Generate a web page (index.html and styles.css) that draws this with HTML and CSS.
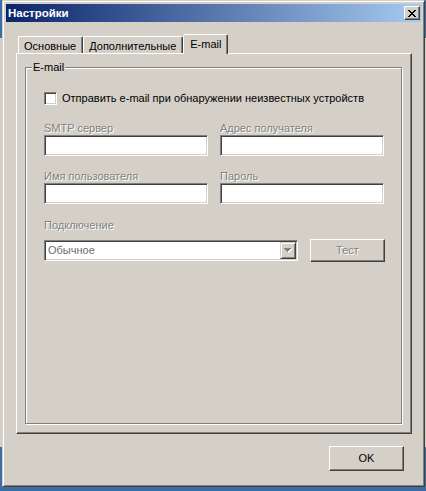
FILE: index.html
```html
<!DOCTYPE html>
<html lang="ru">
<head>
  <meta charset="UTF-8">
  <title>Настройки</title>
  <link rel="stylesheet" href="styles.css">
</head>
<body>

<!-- window behind the dialog -->
<div class="backdrop"></div>

<div class="dialog">
  <div class="titlebar">
    <span class="title">Настройки</span>
    <button class="close" title="Закрыть">
      <svg width="8" height="7" viewBox="0 0 8 7" shape-rendering="crispEdges">
        <path d="M0 0h2v1h-2zM6 0h2v1h-2zM1 1h2v1h-2zM5 1h2v1h-2zM2 2h4v1h-4zM3 3h2v1h-2zM2 4h4v1h-4zM1 5h2v1h-2zM5 5h2v1h-2zM0 6h2v1h-2zM6 6h2v1h-2z" fill="#000"/>
      </svg>
    </button>
  </div>

  <div class="tabs">
    <div class="tab">Основные</div>
    <div class="tab">Дополнительные</div>
    <div class="tab active">E-mail</div>
  </div>

  <div class="panel">
    <div class="group">
      <span class="legend">E-mail</span>

      <label class="check"><span class="box"></span>Отправить e-mail при обнаружении неизвестных устройств</label>

      <div class="fields">
        <div class="field">
          <div class="caption">SMTP сервер</div>
          <div class="edit"></div>
        </div>
        <div class="field">
          <div class="caption">Адрес получателя</div>
          <div class="edit"></div>
        </div>
        <div class="field">
          <div class="caption">Имя пользователя</div>
          <div class="edit"></div>
        </div>
        <div class="field">
          <div class="caption">Пароль</div>
          <div class="edit"></div>
        </div>
      </div>

      <div class="caption conn-caption">Подключение</div>
      <div class="conn-row">
        <div class="combo">
          <span class="combo-text">Обычное</span>
          <span class="drop">
            <svg width="8" height="5" viewBox="0 0 8 5" shape-rendering="crispEdges">
              <path d="M1 1h7v1h-7zM2 2h5v1h-5zM3 3h3v1h-3zM4 4h1v1h-1z" fill="#fff"/>
              <path d="M0 0h7v1h-7zM1 1h5v1h-5zM2 2h3v1h-3zM3 3h1v1h-1z" fill="#808080"/>
            </svg>
          </span>
        </div>
        <button class="btn" disabled>Тест</button>
      </div>
    </div>
  </div>

  <div class="footer">
    <button class="btn ok">OK</button>
  </div>
</div>

</body>
</html>
```

FILE: styles.css
```css
body {
  margin: 0;
  width: 426px;
  height: 491px;
  overflow: hidden;
  position: relative;
  background: #3a6ea5;
  font: 11px/13px "Liberation Sans", Tahoma, sans-serif;
  color: #000;
}

.backdrop {
  position: absolute;
  left: 0;
  right: 0;
  top: 38px;
  height: 409px;
  background: #d4d0c8;
}

.dialog {
  position: absolute;
  left: 2px;
  top: 0;
  width: 423px;
  height: 487px;
  box-sizing: border-box;
  padding: 3px;
  background: #d4d0c8;
  border: 1px solid;
  border-color: #d4d0c8 #404040 #404040 #d4d0c8;
  box-shadow: inset 1px 1px #fff, inset -1px -1px #808080;
  display: flex;
  flex-direction: column;
}

/* title bar */
.titlebar {
  height: 18px;
  display: flex;
  align-items: center;
  justify-content: space-between;
  padding-left: 2px;
  background: linear-gradient(to right, #0a246a, #a6caf0);
}
.title {
  color: #fff;
  font-weight: bold;
  font-size: 11.5px;
}
.close {
  width: 16px;
  height: 14px;
  margin-right: 1px;
  padding: 0;
  box-sizing: border-box;
  background: #d4d0c8;
  border: 1px solid;
  border-color: #fff #404040 #404040 #fff;
  box-shadow: inset -1px -1px #808080;
  display: flex;
  align-items: center;
  justify-content: center;
}

/* tabs */
.tabs {
  display: flex;
  align-items: flex-end;
  height: 19px;
  margin-top: 12px;
  padding-left: 12px;
  position: relative;
  z-index: 1;
}
.tab {
  height: 17px;
  box-sizing: border-box;
  padding: 3px 6px 0 5px;
  border: 1px solid;
  border-bottom: none;
  border-color: #fff #404040 transparent #fff;
  box-shadow: inset -1px 0 #808080;
  border-top-left-radius: 2px;
  border-top-right-radius: 2px;
}
.tab.active {
  height: 20px;
  margin-bottom: -1px;
  padding-top: 3px;
  padding-left: 6px;
  background: #d4d0c8;
}

/* tab page */
.panel {
  height: 381px;
  box-sizing: border-box;
  margin: 0 9px 0 10px;
  padding: 13px 9px 9px 8px;
  border: 1px solid;
  border-color: #fff #404040 #404040 #fff;
  box-shadow: inset -1px -1px #808080;
  display: flex;
}

.group {
  flex: 1;
  position: relative;
  padding: 24px 0 0 18px;
  border: 1px solid #808080;
  box-shadow: inset 1px 1px #fff, 1px 1px #fff;
}
.legend {
  position: absolute;
  left: 6px;
  top: -7px;
  padding: 0 1px;
  background: #d4d0c8;
}

.check {
  display: flex;
  align-items: center;
  gap: 5px;
  height: 13px;
}
.box {
  width: 13px;
  height: 13px;
  box-sizing: border-box;
  background: #fff;
  border: 1px solid;
  border-color: #808080 #fff #fff #808080;
  box-shadow: inset 1px 1px #404040, inset -1px -1px #d4d0c8;
}

.fields {
  display: grid;
  grid-template-columns: 164px 164px;
  column-gap: 12px;
  row-gap: 14px;
  margin-top: 17px;
}

.caption {
  color: #808080;
  text-shadow: 1px 1px #fff;
}

.edit {
  height: 21px;
  box-sizing: border-box;
  background: #fff;
  border: 1px solid;
  border-color: #808080 #fff #fff #808080;
  box-shadow: inset 1px 1px #404040, inset -1px -1px #d4d0c8;
}

.conn-caption {
  margin-top: 15px;
}
.conn-row {
  display: flex;
  align-items: center;
  gap: 12px;
  margin-top: 7px;
}
.combo {
  width: 254px;
  height: 21px;
  box-sizing: border-box;
  padding: 1px;
  display: flex;
  align-items: stretch;
  background: #fff;
  border: 1px solid;
  border-color: #808080 #fff #fff #808080;
  box-shadow: inset 1px 1px #404040, inset -1px -1px #d4d0c8;
}
.combo-text {
  flex: 1;
  padding-left: 2px;
  line-height: 17px;
  color: #6d6d6d;
}
.drop {
  width: 16px;
  box-sizing: border-box;
  background: #d4d0c8;
  border: 1px solid;
  border-color: #d4d0c8 #404040 #404040 #d4d0c8;
  box-shadow: inset 1px 1px #fff, inset -1px -1px #808080;
  display: flex;
  align-items: center;
  justify-content: center;
}

.btn {
  width: 75px;
  height: 23px;
  padding: 0;
  font: inherit;
  color: #000;
  background: #d4d0c8;
  border: 1px solid;
  border-color: #fff #404040 #404040 #fff;
  box-shadow: inset -1px -1px #808080;
}
.btn:disabled {
  color: #808080;
  text-shadow: 1px 1px #fff;
}

.footer {
  display: flex;
  justify-content: flex-end;
  margin-top: 12px;
  padding-right: 17px;
}
.btn.ok {
  height: 25px;
}
```
